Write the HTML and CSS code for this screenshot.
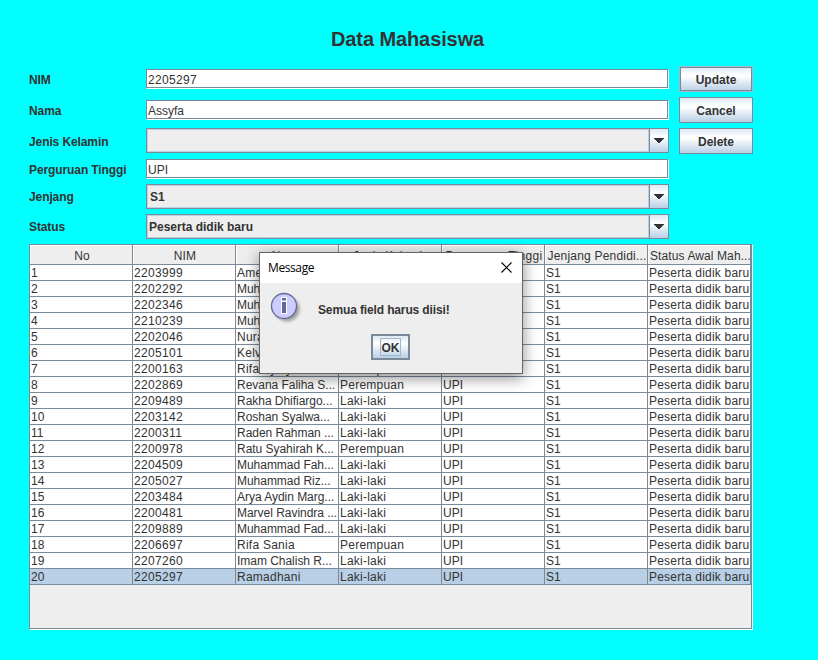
FILE: index.html
```
<!DOCTYPE html>
<html lang="id">
<head>
<meta charset="utf-8">
<title>Data Mahasiswa</title>
<link rel="stylesheet" href="styles.css">
</head>
<body>
<h1>Data Mahasiswa</h1>
<main>
<form class="form">
<div class="row r1"><label>NIM</label><div class="field num">2205297</div><div class="btn hover"><span>Update</span></div></div>
<div class="row r2"><label>Nama</label><div class="field f-as">Assyfa</div><div class="btn"><span>Cancel</span></div></div>
<div class="row r3"><label>Jenis Kelamin</label><div class="combo"><div class="value"></div><div class="arrow"><svg width="10" height="5" viewBox="0 0 10 5"><path d="M0 0h10v1H9v1H8v1H7v1H6v1H4V4H3V3H2V2H1V1H0z"/></svg></div></div><div class="btn"><span>Delete</span></div></div>
<div class="row r4"><label>Perguruan Tinggi</label><div class="field">UPI</div></div>
<div class="row r5"><label>Jenjang</label><div class="combo"><div class="value">S1</div><div class="arrow"><svg width="10" height="5" viewBox="0 0 10 5"><path d="M0 0h10v1H9v1H8v1H7v1H6v1H4V4H3V3H2V2H1V1H0z"/></svg></div></div></div>
<div class="row r6"><label>Status</label><div class="combo"><div class="value v-st">Peserta didik baru</div><div class="arrow"><svg width="10" height="5" viewBox="0 0 10 5"><path d="M0 0h10v1H9v1H8v1H7v1H6v1H4V4H3V3H2V2H1V1H0z"/></svg></div></div></div>
</form>
<div class="pane"><table><thead><tr><th>No</th><th>NIM</th><th>Nama</th><th>Jenis Kelamin</th><th class="h-pt">Perguruan Tinggi</th><th class="h-jp">Jenjang Pendidi...</th><th class="h-sa">Status Awal Mah...</th></tr></thead><tbody id="rows"></tbody></table></div>
</main>
<section class="dialog">
<header><span>Message</span><svg width="11" height="11" viewBox="0 0 11 11"><path d="M.5.5l10 10M10.500.5l-10 10" stroke="#000" stroke-width="1.1"/></svg></header>
<div class="body">
<svg class="info" width="34" height="34" viewBox="0 0 34 34"><defs><filter id="s" x="-30%" y="-30%" width="160%" height="160%"><feGaussianBlur stdDeviation="1.6"/></filter></defs><circle cx="17" cy="17" r="12.500" fill="#777" opacity=".65" filter="url(#s)"/><circle cx="14" cy="14" r="12.500" fill="#ccf" stroke="#669" stroke-width="1.300"/><path d="M11 5h6v17h-6z" fill="#fff"/><path d="M12 6h4v2.500h-4zM12 10h4v11h-4z" fill="#669"/></svg>
<p>Semua field harus diisi!</p>
</div>
<div class="ok"><span>OK</span></div>
</section>
<script src="rows.js"></script>
</body>
</html>
```
FILE: rows.js
```
const L = "Laki-laki", P = "Perempuan";
const data = [
  ["2203999", "Amelia Putri", P], ["2202292", "Muhammad Fa...", L], ["2202346", "Muhammad Ra...", L],
  ["2210239", "Muhammad Ri...", L], ["2202046", "Nuraini Safitri", P], ["2205101", "Kelvin Julian", L],
  ["2200163", "Rifa Ayisya", P], ["2202869", "Revana Faliha S...", P], ["2209489", "Rakha Dhifiargo...", L],
  ["2203142", "Roshan Syalwa...", L], ["2200311", "Raden Rahman ...", L], ["2200978", "Ratu Syahirah K...", P],
  ["2204509", "Muhammad Fah...", L], ["2205027", "Muhammad Riz...", L], ["2203484", "Arya Aydin Marg...", L],
  ["2200481", "Marvel Ravindra ...", L], ["2209889", "Muhammad Fad...", L], ["2206697", "Rifa Sania", P],
  ["2207260", "Imam Chalish R...", L], ["2205297", "Ramadhani", L]
];
const body = document.getElementById("rows");
data.forEach((d, i) => {
  const tr = body.insertRow();
  if (i === data.length - 1) tr.className = "selected";
  [i + 1, ...d, "UPI", "S1", "Peserta didik baru"].forEach((v, c) => {
    const td = tr.insertCell();
    td.textContent = v;
    td.className = "c" + c;
    if (c === 2 && v.endsWith("...")) td.classList.add("cut");
  });
});
```
FILE: styles.css
```
* { box-sizing: border-box; }
body { margin: 0; width: 818px; height: 660px; overflow: hidden; background: #0ff; color: #333; font: 12px/16px "Liberation Sans", Arial, sans-serif; }
h1 { margin: 0; padding: 26px 0 0 331px; height: 66px; font-size: 20px; line-height: 26px; letter-spacing: -.1px; }
main { padding-left: 29px; }
.form { height: 178px; }
.row { display: flex; align-items: flex-start; }
.row label { width: 117px; font-weight: bold; letter-spacing: -.1px; }
.r1 { height: 31px; padding-top: 3px; }
.r2 { height: 31px; padding-top: 3px; }
.r3 { height: 28px; }
.r4 { height: 28px; }
.r5 { height: 30px; }
.r1 label, .r2 label { padding-top: 3px; }
.r3 label { padding-top: 6px; }
.r4 { padding-top: 3px; }
.r4 label { padding-top: 3px; }
.r5 label, .r6 label { padding-top: 5px; }
.field { width: 523px; height: 20px; background: #fff; border: 1px solid #7a8a99; border-right-color: #fff; border-bottom-color: #fff; box-shadow: inset -1px -1px #7a8a99; padding: 2px 1px 0; line-height: 16px; }
.btn { width: 74px; height: 26px; margin-left: 10px; border: 1px solid #7a8a99; background: linear-gradient(#dde8f3, #fff 34%, #fff 38%, #b8cfe5); font-weight: bold; text-align: center; line-height: 27px; }
.r1 .btn, .r2 .btn { margin-top: -3px; }
.btn.hover { border: 1px solid #a3b8cc; box-shadow: inset 0 0 0 1px #7a8a99; }
.combo { display: flex; width: 523px; height: 25px; border: 1px solid #7a8a99; background: #eee; font-weight: bold; }
.value { width: 502px; border: 1px solid #b8cfe5; padding: 3px 2px; line-height: 16px; }
.v-st { padding-left: 1px; }
.arrow { flex: 1; border-left: 1px solid #7a8a99; background: linear-gradient(#dde8f3, #fff 34%, #b8cfe5); display: flex; justify-content: center; padding-top: 9px; }
.arrow path { fill: #333; }
.pane { width: 724px; height: 386px; border: 1px solid #7a8a99; border-right-color: #fff; border-bottom-color: #fff; box-shadow: inset -1px -1px #7a8a99; background: #eee; }
table { border-collapse: separate; border-spacing: 0; table-layout: fixed; width: 721px; }
th, td { border-right: 1px solid #7a8a99; border-bottom: 1px solid #7a8a99; white-space: nowrap; overflow: hidden; text-align: left; width: 103px; font-weight: normal; }
th { height: 20px; text-align: center; box-shadow: inset 1px 1px #fff; line-height: 16px; padding: 3px 0 0 2px; letter-spacing: .1px; }
.h-pt { letter-spacing: .35px; }
.h-jp { letter-spacing: .2px; }
td { height: 16px; line-height: 14px; padding: 1px 0 0 1px; background: #fff; }
.selected td { background: #b8cfe5; }
.num, .c1 { letter-spacing: .33px; }
.c2 { letter-spacing: .25px; }
.c2.cut { letter-spacing: -.03px; }
.c3 { letter-spacing: .24px; }
.c6 { letter-spacing: .2px; }
.dialog { position: absolute; left: 259px; top: 252px; width: 264px; height: 122px; border: 1px solid #60666b; background: #eee; box-shadow: 0 4px 14px rgba(0,0,0,.45); }
.dialog header { height: 30px; background: #fff; color: #000; font: 12px/30px "Open Sans", sans-serif; letter-spacing: -.4px; display: flex; justify-content: space-between; align-items: center; padding: 0 10px 0 8px; }
.dialog header svg { margin-top: -2px; }
.body { display: flex; height: 51px; padding: 9px 0 0 10px; }
.body p { margin: 10px 0 0 14px; font-weight: bold; letter-spacing: -.13px; }
.ok { width: 39px; height: 26px; margin-left: 111px; border: 2px solid #7a8a99; background: linear-gradient(#dde8f3, #fff 34%, #b8cfe5); padding: 2px 7px; font-weight: bold; }
.ok span { display: block; height: 18px; border: 1px solid #a3b8cc; line-height: 18px; text-align: center; }
```
